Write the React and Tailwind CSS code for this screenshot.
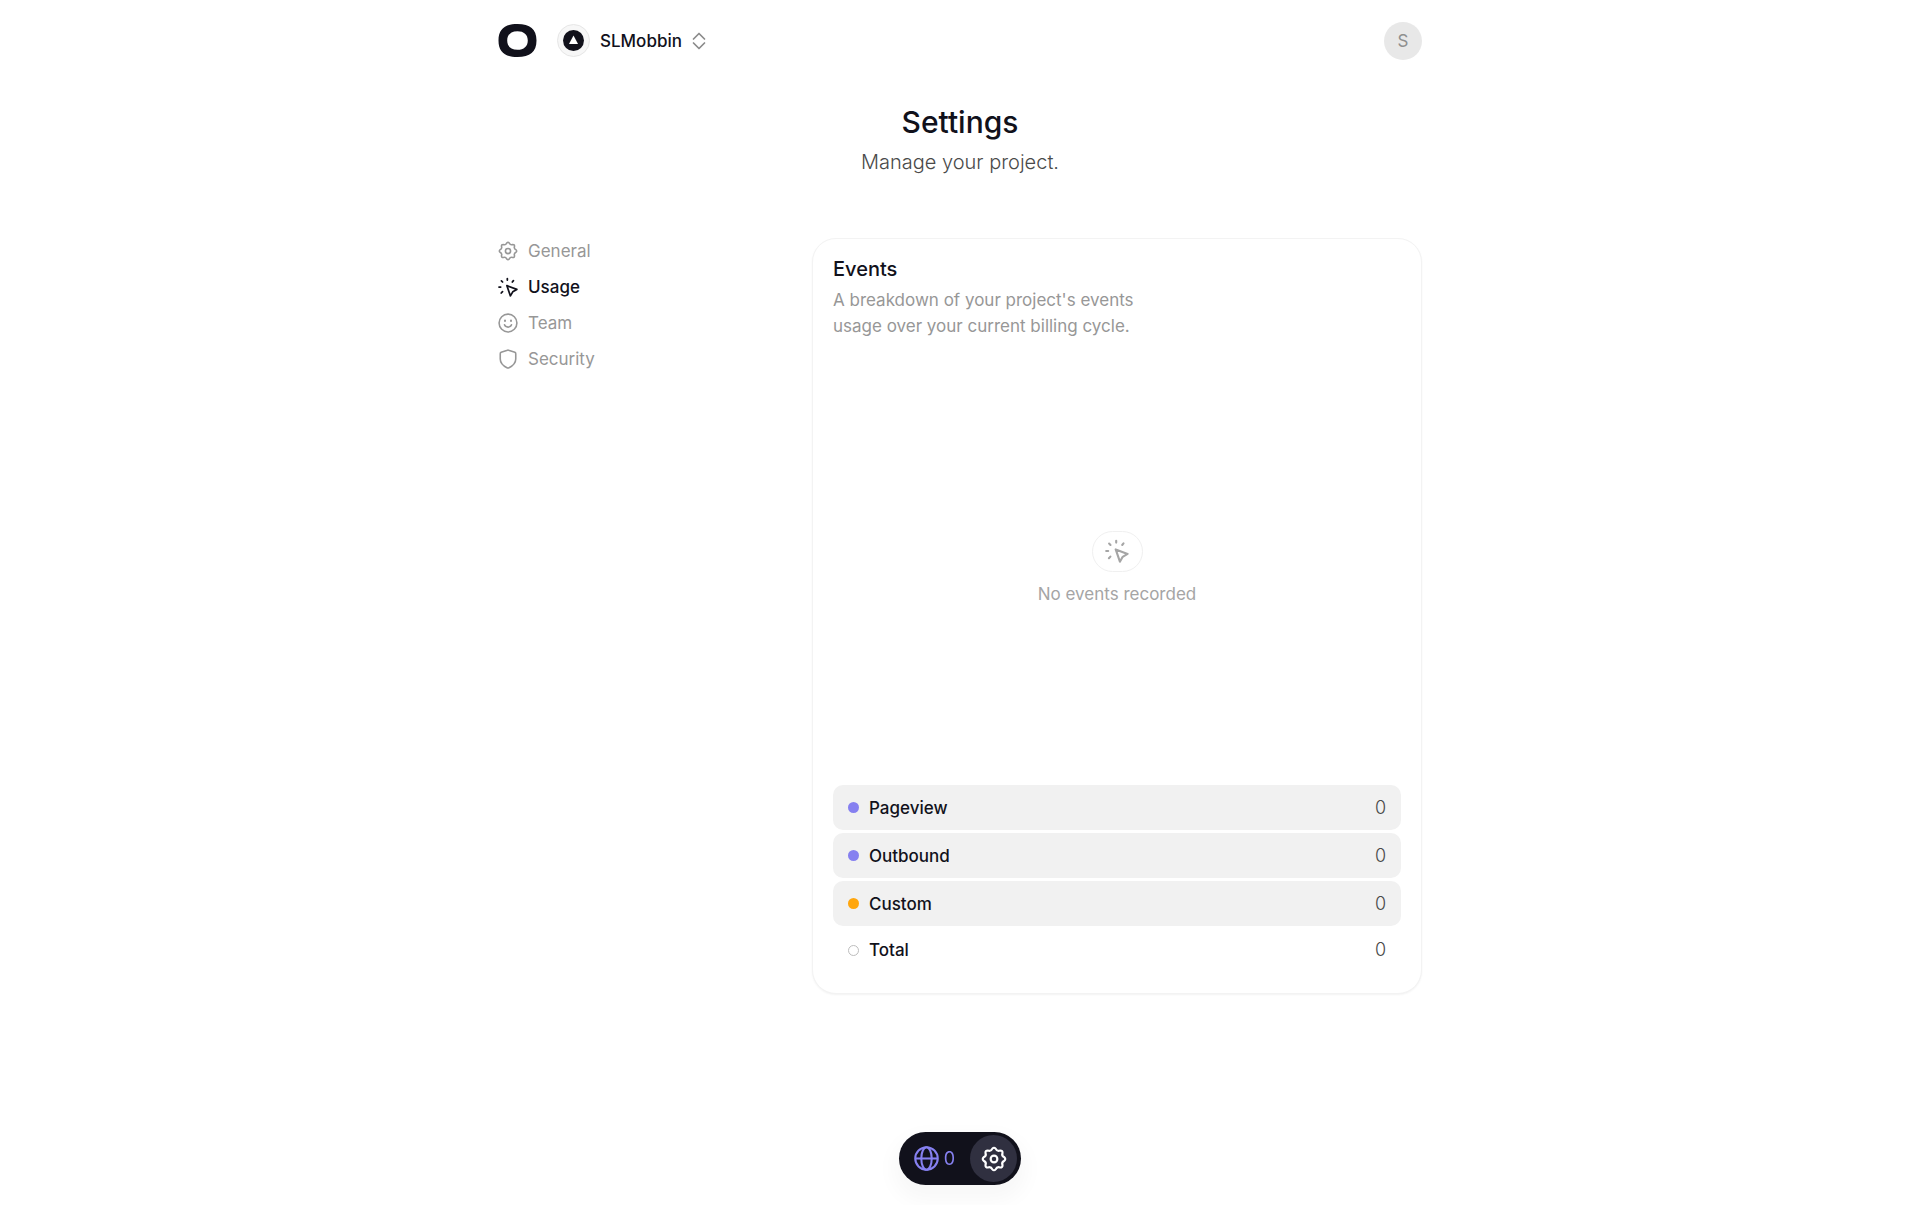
import React from 'react';
import clsx from 'clsx';

function GearIcon({ className, strokeWidth = 1.9 }) {
  return (
    <svg viewBox="0 0 24 24" fill="none" stroke="currentColor" strokeWidth={strokeWidth} strokeLinejoin="round" className={className} aria-hidden="true">
      <path d="M13.52 2.42Q14.79 5.26 17.7 4.15Q19.92 4.08 19.85 6.3Q18.74 9.21 21.58 10.48Q23.2 12 21.58 13.52Q18.74 14.79 19.85 17.7Q19.92 19.92 17.7 19.85Q14.79 18.74 13.52 21.58Q12 23.2 10.48 21.58Q9.21 18.74 6.3 19.85Q4.08 19.92 4.15 17.7Q5.26 14.79 2.42 13.52Q.8 12 2.42 10.48Q5.26 9.21 4.15 6.3Q4.08 4.08 6.3 4.15Q9.21 5.26 10.48 2.42Q12 .8 13.52 2.42Z" />
      <circle cx="12" cy="12" r="3.1" />
    </svg>
  );
}

function ClickIcon({ className }) {
  return (
    <svg viewBox="0 0 24 24" fill="none" stroke="currentColor" strokeWidth="2.1" strokeLinecap="round" strokeLinejoin="round" className={className} aria-hidden="true">
      <path d="M11.2 1.8V3.6M4.1 4.6L5.5 6M18.5 4.4L17.2 6M1.2 12H3.2M3.9 19.2L5.4 17.6" />
      <path d="M10.7 10.4L22.6 14.9L17.7 17.8L14.9 22.7Z" />
    </svg>
  );
}

function SmileIcon({ className }) {
  return (
    <svg viewBox="0 0 24 24" fill="none" stroke="currentColor" strokeWidth="1.9" strokeLinecap="round" className={className} aria-hidden="true">
      <circle cx="12" cy="12" r="10.7" />
      <path d="M7.8 14.2C9 17.8 15 17.8 16.2 14.2" />
      <path d="M8.4 8.9V9.5M15.6 8.9V9.5" strokeWidth="2.4" />
    </svg>
  );
}

function ShieldIcon({ className }) {
  return (
    <svg viewBox="0 0 24 24" fill="none" stroke="currentColor" strokeWidth="1.9" strokeLinejoin="round" className={className} aria-hidden="true">
      <path d="M11.3 1.4Q12 1.1 12.7 1.4L20.2 4Q21.3 4.5 21.3 5.7V12C21.3 17.5 17.5 20.5 12.7 22.7Q12 23 11.3 22.7C6.5 20.5 2.7 17.5 2.7 12V5.7Q2.7 4.5 3.8 4Z" />
    </svg>
  );
}

function GlobeIcon({ className }) {
  return (
    <svg viewBox="0 0 24 24" fill="none" stroke="currentColor" strokeWidth="2" className={className} aria-hidden="true">
      <circle cx="12" cy="12" r="10.8" />
      <ellipse cx="12" cy="12" rx="5" ry="10.8" />
      <path d="M1.2 12H22.8" />
    </svg>
  );
}

const NAV_ITEMS = [
  { id: 'general', label: 'General', Icon: GearIcon },
  { id: 'usage', label: 'Usage', Icon: ClickIcon },
  { id: 'team', label: 'Team', Icon: SmileIcon },
  { id: 'security', label: 'Security', Icon: ShieldIcon },
];

const EVENT_ROWS = [
  { label: 'Pageview', count: 0, dot: 'bg-[#8680f0]' },
  { label: 'Outbound', count: 0, dot: 'bg-[#8680f0]' },
  { label: 'Custom', count: 0, dot: 'bg-[#ffa60d]' },
];

function Header() {
  return (
    <header className="flex h-[81px] items-center justify-between">
      <div className="flex items-center gap-5">
        <a href="#home" aria-label="Home">
          <svg viewBox="0 0 38 33" className="h-[33px] w-[39px]" aria-hidden="true">
            <path fillRule="evenodd" fill="#11111b" d="M19 0C31.5 0 38 5 38 16.5S31.5 33 19 33S0 28 0 16.5S6.5 0 19 0ZM19 7.2C12.6 7.2 8.7 10.6 8.7 16.5S12.6 25.8 19 25.8S29.3 22.4 29.3 16.5S25.4 7.2 19 7.2Z" />
          </svg>
        </a>
        <button type="button" className="flex items-center gap-[10px]">
          <span className="flex size-[33px] items-center justify-center rounded-full border border-[#e6e6e6] bg-[#f7f7f7]">
            <svg viewBox="0 0 21 21" className="size-[21px]" aria-hidden="true">
              <circle cx="10.5" cy="10.5" r="10.5" fill="#11111b" />
              <path d="M10.5 5.5L15 14H6Z" fill="#fff" />
            </svg>
          </span>
          <span className="text-[17px] leading-7 font-medium text-[#11111b]">SLMobbin</span>
          <svg viewBox="0 0 14 18" fill="none" stroke="#8b8b8b" strokeWidth="1.7" strokeLinecap="round" strokeLinejoin="round" className="h-[18px] w-[14px]" aria-hidden="true">
            <path d="M1.5 7L7 1.5L12.5 7M1.5 11L7 16.5L12.5 11" />
          </svg>
        </button>
      </div>
      <button type="button" aria-label="Account" className="flex size-[38px] items-center justify-center rounded-full bg-[#e8e8e8] text-[17px] leading-7 text-[#8f8f8f]">
        S
      </button>
    </header>
  );
}

function SettingsNav() {
  return (
    <nav className="flex w-60 shrink-0 flex-col gap-[10px]">
      {NAV_ITEMS.map(({ id, label, Icon }) => (
        <a
          key={id}
          href={`#${id}`}
          className={clsx(
            'flex items-center gap-[10px] text-[17px] leading-[26px]',
            id === 'usage' ? 'font-medium text-[#11111b]' : 'text-[#979797]'
          )}
        >
          <Icon className="size-5" />
          {label}
        </a>
      ))}
    </nav>
  );
}

function EventsCard() {
  return (
    <section className="w-full max-w-[610px] rounded-3xl border border-[#f3f3f3] bg-white px-5 pt-4 pb-[22px] shadow-[0_1px_2px_rgba(0,0,0,0.05)]">
      <h2 className="text-xl leading-7 font-medium text-[#11111b]">Events</h2>
      <p className="mt-1 max-w-80 text-[17px] leading-[26px] text-[#979797]">
        A breakdown of your project's events usage over your current billing cycle.
      </p>

      <div className="flex h-[446px] flex-col items-center justify-center gap-2 pt-[14px] text-[#a5a5a5]">
        <div className="flex h-[41px] w-[51px] items-center justify-center rounded-full border border-[#f0f0f0]">
          <ClickIcon className="size-6" />
        </div>
        <p className="text-[17px] leading-7">No events recorded</p>
      </div>

      <dl className="flex flex-col gap-[3px] text-[17px] leading-7">
        {EVENT_ROWS.map((row) => (
          <div key={row.label} className="flex h-[45px] items-center justify-between rounded-[10px] bg-[#f1f1f1] px-[15px]">
            <dt className="flex items-center gap-[10px] font-medium text-[#11111b]">
              <span className={clsx('size-[11px] rounded-full', row.dot)} />
              {row.label}
            </dt>
            <dd className="text-lg font-light text-[#4a4a4a]">{row.count}</dd>
          </div>
        ))}
        <div className="flex h-[42px] items-center justify-between px-[15px]">
          <dt className="flex items-center gap-[10px] font-medium text-[#11111b]">
            <span className="size-[11px] rounded-full border border-[#bdbdbd]" />
            Total
          </dt>
          <dd className="text-lg font-light text-[#4a4a4a]">0</dd>
        </div>
      </dl>
    </section>
  );
}

function Dock() {
  return (
    <div className="fixed inset-x-0 bottom-5 flex justify-center">
      <div className="flex items-center gap-[15px] rounded-full bg-[#11111b] py-[3px] pr-1 pl-[15px] shadow-[0_10px_20px_6px_rgba(17,17,27,0.03)]">
        <a href="#visitors" className="flex items-center gap-[5px] text-lg text-[#8680f0]">
          <GlobeIcon className="size-[25px]" />
          0
        </a>
        <button type="button" aria-label="Settings" className="flex size-[47px] items-center justify-center rounded-full bg-[#303040] text-white">
          <GearIcon className="size-[26px]" strokeWidth={2} />
        </button>
      </div>
    </div>
  );
}

export default function App() {
  return (
    <div className="min-h-screen bg-white font-['Inter',sans-serif]">
      <div className="mx-auto max-w-[924px] pb-24">
        <Header />
        <div className="mt-[19px] text-center">
          <h1 className="text-3xl leading-[44px] font-medium text-[#11111b]">Settings</h1>
          <p className="mt-1 text-xl leading-7 font-light text-[#4a4a4a]">Manage your project.</p>
        </div>
        <main className="mt-[62px] flex items-start justify-between">
          <SettingsNav />
          <EventsCard />
        </main>
      </div>
      <Dock />
    </div>
  );
}
